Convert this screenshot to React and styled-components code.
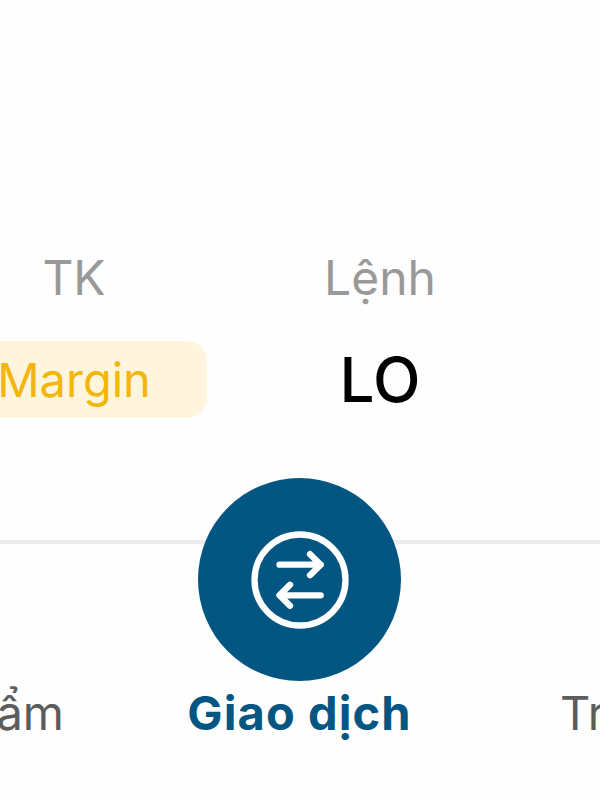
import React from "react";
import styled, { createGlobalStyle } from "styled-components";

const Global = createGlobalStyle`
  * { box-sizing: border-box; }
  body { margin: 0; background: #fefefe; overflow: hidden; }
`;
const Screen = styled.main`
  width: 600px; height: 800px; overflow: hidden; display: flex; flex-direction: column;
  background: #fefefe; font-family: Inter, "Liberation Sans", sans-serif;
`;
const Order = styled.section`
  height: 540px; flex: none; padding-top: 248px; display: flex;
`;
const Column = styled.div`
  width: ${p => p.$w}px; flex: none; display: flex; flex-direction: column; align-items: center;
  margin-left: ${p => p.$left}px;
`;
const Heading = styled.div`
  height: 60px; line-height: 60px; font-size: 48px; color: #999; white-space: nowrap;
`;
const Badge = styled.div`
  width: 266px; height: 77px; margin-top: 33px; border-radius: 20px; background: #fff5dc;
  color: #f3b60d; font-size: 47px; line-height: 77px; text-align: center; white-space: nowrap;
`;
const Value = styled.div`
  margin-top: 33px; height: 77px; line-height: 77px; font-size: 62px; color: #000; font-weight: 500;
`;
const Nav = styled.nav`
  height: 260px; flex: none; border-top: 4px solid #ebebeb; display: flex;
`;
const Tab = styled.div`
  width: ${p => p.$w}px; flex: none; display: flex; flex-direction: column;
  align-items: ${p => p.$align || "center"};
  padding-left: ${p => p.$inset || 0}px;
`;
const Action = styled.div`
  width: 203px; height: 203px; border-radius: 50%; background: #045682; margin-top: -66px;
  display: flex; align-items: center; justify-content: center; flex: none;
`;
const Label = styled.div`
  margin-top: ${p => p.$active ? 2 : 139}px; height: 60px; line-height: 60px; font-size: 47px;
  color: ${p => p.$active ? "#045682" : "#5c5c5c"}; font-weight: ${p => p.$active ? 700 : 400};
  letter-spacing: ${p => p.$active ? 1.1 : 0}px;
  white-space: nowrap;
`;
const Transfer = () => (
  <svg width="98" height="98" viewBox="0 0 98 98" fill="none" stroke="#fff" strokeWidth="6.3" strokeLinecap="round" strokeLinejoin="round">
    <circle cx="49" cy="49" r="45.5" />
    <path d="M28.5 33.7H69.7M59 23.2L69.7 33.7L59 44.2M69.7 64.3H28.5M39 53.8L28.5 64.3L39 74.8" />
  </svg>
);
export default function App() {
  return <><Global /><Screen>
    <Order>
      <Column $left={-59} $w={266}><Heading>TK</Heading><Badge>Margin</Badge></Column>
      <Column $left={73} $w={200}><Heading>Lệnh</Heading><Value>LO</Value></Column>
    </Order>
    <Nav>
      <Tab $w={64} $align="flex-end"><Label>phẩm</Label></Tab>
      <Tab $w={471}><Action><Transfer /></Action><Label $active>Giao dịch</Label></Tab>
      <Tab $w={65} $align="flex-start" $inset={25}><Label>Tr</Label></Tab>
    </Nav>
  </Screen></>;
}
